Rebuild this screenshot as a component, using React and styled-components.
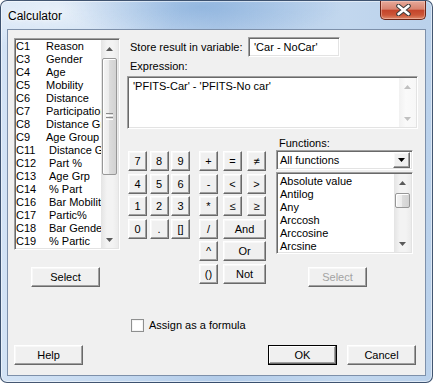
import React from 'react';
import styled, { createGlobalStyle, css } from 'styled-components';

const variables = [
    ['C1', 'Reason'], ['C3', 'Gender'], ['C4', 'Age'], ['C5', 'Mobility'],
    ['C6', 'Distance'], ['C7', 'Participation'], ['C8', 'Distance Group'],
    ['C9', 'Age Group'], ['C11', 'Distance Grp'], ['C12', 'Part %'],
    ['C13', 'Age Grp'], ['C14', '% Part'], ['C16', 'Bar Mobility'],
    ['C17', 'Partic%'], ['C18', 'Bar Gender'], ['C19', '% Partic'],
];

const functions = ['Absolute value', 'Antilog', 'Any', 'Arccosh', 'Arccosine', 'Arcsine'];

const digits = ['7', '8', '9', '4', '5', '6', '1', '2', '3', '0', '.', '[]'];

const operators = [
    ['+'], ['='], ['≠'],
    ['-'], ['<'], ['>'],
    ['*'], ['≤'], ['≥'],
    ['/'], ['And', 2],
    ['^'], ['Or', 2],
    ['()'], ['Not', 2],
];

const Arrow = ({ down, color = '#5a5a5a' }) => (
    <svg width="7" height="4" viewBox="0 0 7 4">
        <polygon points={down ? '0,0 7,0 3.5,4' : '0,4 7,4 3.5,0'} fill={color} />
    </svg>
);

const Grip = () => (
    <svg width="7" height="7" viewBox="0 0 7 7">
        {[0.5, 2.5, 4.5, 6.5].map((y) => (
            <line key={y} x1="0" x2="7" y1={y} y2={y} stroke={y % 4 < 1 ? '#8a8a8a' : '#fff'} strokeWidth="1" />
        ))}
    </svg>
);

const Scrollbar = ({ thumbTop, thumbHeight, disabled }) => (
    <ScrollTrack $disabled={disabled}>
        <ArrowBox><Arrow color={disabled ? '#c0c0c0' : '#5a5a5a'} /></ArrowBox>
        {thumbHeight ? (
            <Thumb $top={thumbTop} $h={thumbHeight}>
                {thumbHeight > 30 && <Grip />}
            </Thumb>
        ) : null}
        <ArrowBox $bottom><Arrow down color={disabled ? '#c0c0c0' : '#5a5a5a'} /></ArrowBox>
    </ScrollTrack>
);

const App = () => {
    return (
        <>
            <GlobalStyle />
            <Window>
                <TitleBar>
                    <Title>Calculator</Title>
                    <CloseButton>
                        <svg width="15" height="12" viewBox="0 0 15 12">
                            <path d="M2.5 2 L12.5 10 M12.5 2 L2.5 10" stroke="#3c3c3c" strokeWidth="4.6" strokeLinecap="round" />
                            <path d="M2.5 2 L12.5 10 M12.5 2 L2.5 10" stroke="#fff" strokeWidth="2.6" strokeLinecap="round" />
                        </svg>
                    </CloseButton>
                </TitleBar>
                <Client>
                    <TopSection>
                        <LeftCol>
                            <ListBox $h={212}>
                                <Items>
                                    {variables.map(([code, name]) => (
                                        <VarRow key={code}>
                                            <Code $w={code.length > 2 ? 33 : 30}>{code}</Code>
                                            <span>{name}</span>
                                        </VarRow>
                                    ))}
                                </Items>
                                <Scrollbar thumbTop={1} thumbHeight={117} />
                            </ListBox>
                            <Button $w={69} $ml={17} $mt={17}>Select</Button>
                        </LeftCol>
                        <RightCol>
                            <StoreRow>
                                <Label $w={121}>Store result in variable:</Label>
                                <TextInput>'Car - NoCar'</TextInput>
                            </StoreRow>
                            <Label $mt={3}>Expression:</Label>
                            <ExprBox>
                                <ExprText>'PFITS-Car' - 'PFITS-No car'</ExprText>
                                <Scrollbar disabled />
                            </ExprBox>
                            <Lower>
                                <Keypad>
                                    <DigitPad>
                                        {digits.map((d) => (
                                            <Key key={d}>{d}</Key>
                                        ))}
                                    </DigitPad>
                                    <OpPad>
                                        {operators.map(([op, span]) => (
                                            <Key key={op} $span={span}>{op}</Key>
                                        ))}
                                    </OpPad>
                                </Keypad>
                                <Functions>
                                    <Label>Functions:</Label>
                                    <Combo>
                                        <ComboText>All functions</ComboText>
                                        <ComboButton><Arrow down color="#000" /></ComboButton>
                                    </Combo>
                                    <ListBox $h={82} $mt={2}>
                                        <Items $pt={1}>
                                            {functions.map((f) => (
                                                <FuncRow key={f}>{f}</FuncRow>
                                            ))}
                                        </Items>
                                        <Scrollbar thumbTop={2} thumbHeight={15} />
                                    </ListBox>
                                    <Button $w={59} $ml={32} $mt={13} disabled>Select</Button>
                                </Functions>
                            </Lower>
                        </RightCol>
                    </TopSection>
                    <CheckRow>
                        <CheckBox />
                        <span>Assign as a formula</span>
                    </CheckRow>
                    <ButtonRow>
                        <Button $w={69}>Help</Button>
                        <ButtonGroup>
                            <Button $w={69} $default>OK</Button>
                            <Button $w={69}>Cancel</Button>
                        </ButtonGroup>
                    </ButtonRow>
                </Client>
            </Window>
        </>
    );
}

const GlobalStyle = createGlobalStyle`
    html, body {
        margin: 0;
        padding: 0;
        background: #ffffff;
    }
    body {
        font-family: "Liberation Sans", Arial, sans-serif;
        font-size: 11px;
        color: #000;
    }
    * {
        box-sizing: border-box;
    }
`

const raised = css`
    border: 1px solid;
    border-color: #ffffff #696969 #696969 #ffffff;
    box-shadow: inset -1px -1px #a0a0a0, inset 1px 1px #f8f8f8;
    background: #f0f0f0;
`

const sunken = css`
    border: 1px solid;
    border-color: #a0a0a0 #ffffff #ffffff #a0a0a0;
    box-shadow: inset 1px 1px #696969, inset -1px -1px #e3e3e3;
    background: #ffffff;
`

const Window = styled.div`
    width: 433px;
    height: 383px;
    border: 1px solid rgba(30, 50, 80, 0.8);
    border-radius: 7px;
    display: flex;
    flex-direction: column;
    overflow: hidden;
    background:
        radial-gradient(ellipse 140px 34px at 200px 6px, rgba(120, 165, 215, 0.55), transparent),
        radial-gradient(ellipse 120px 40px at 60px 10px, rgba(255, 255, 255, 0.55), transparent),
        linear-gradient(to right, #d3e3f5 0%, #c2d7ef 30%, #b3cce9 50%, #c2d7ee 80%, #bad1eb 100%);
    box-shadow: inset 0 0 0 1px rgba(255, 255, 255, 0.5);
`

const TitleBar = styled.div`
    height: 28px;
    display: flex;
    justify-content: space-between;
    align-items: flex-start;
`

const Title = styled.div`
    padding: 8px 0 0 7px;
    font-size: 12px;
    line-height: 14px;
    text-shadow: 0 0 6px rgba(255, 255, 255, 0.95), 0 0 3px rgba(255, 255, 255, 0.8);
`

const CloseButton = styled.div`
    width: 46px;
    height: 19px;
    margin-right: 6px;
    display: flex;
    align-items: center;
    justify-content: center;
    border: 1px solid #6a2416;
    border-top: none;
    border-radius: 0 0 5px 5px;
    background: linear-gradient(#e6a99a 0%, #d88470 45%, #c4452b 52%, #cc5638 78%, #de8a6c 100%);
    box-shadow: inset 0 0 0 1px rgba(255, 220, 210, 0.4);
`

const Client = styled.div`
    flex: 1;
    margin: 0 6px 6px 6px;
    padding: 8px 0 0 6px;
    display: flex;
    flex-direction: column;
    background: #f0f0f0;
    border: 1px solid #7d90aa;
`

const TopSection = styled.div`
    display: flex;
    align-items: flex-start;
`

const LeftCol = styled.div`
    width: 106px;
    display: flex;
    flex-direction: column;
`

const RightCol = styled.div`
    width: 291px;
    margin: -1px 0 0 7px;
    display: flex;
    flex-direction: column;
`

const ListBox = styled.div`
    ${sunken};
    height: ${(p) => p.$h}px;
    margin-top: ${(p) => p.$mt || 0}px;
    padding: 1px;
    display: flex;
    overflow: hidden;
`

const Items = styled.div`
    flex: 1;
    min-width: 0;
    padding-top: ${(p) => p.$pt || 0}px;
    overflow: hidden;
`

const VarRow = styled.div`
    height: 13px;
    line-height: 13px;
    display: flex;
    white-space: nowrap;
`

const Code = styled.span`
    flex: none;
    width: ${(p) => p.$w}px;
`

const FuncRow = styled.div`
    height: 13px;
    line-height: 13px;
    padding-left: 2px;
    white-space: nowrap;
`

const ScrollTrack = styled.div`
    width: 17px;
    flex: none;
    display: flex;
    flex-direction: column;
    background: ${(p) => p.$disabled
        ? 'linear-gradient(to right, #f1f1f1, #fafafa 40%, #f7f7f7)'
        : 'linear-gradient(to right, #e4e4e4, #f3f3f3 35%, #f3f3f3 70%, #ebebeb)'};
`

const ArrowBox = styled.div`
    height: 17px;
    flex: none;
    display: flex;
    align-items: center;
    justify-content: center;
    margin-top: ${(p) => (p.$bottom ? 'auto' : '0')};
`

const Thumb = styled.div`
    flex: none;
    height: ${(p) => p.$h}px;
    margin: ${(p) => p.$top}px 0 0 1px;
    width: 15px;
    border: 1px solid #979797;
    border-radius: 2px;
    display: flex;
    align-items: center;
    justify-content: center;
    background: linear-gradient(to right, #f5f5f5, #ececec 45%, #dcdcdc 50%, #d2d2d2);
    box-shadow: inset 1px 1px #ffffff;
`

const Button = styled.button`
    ${raised};
    width: ${(p) => p.$w}px;
    height: 20px;
    margin: ${(p) => p.$mt || 0}px 0 0 ${(p) => p.$ml || 0}px;
    padding: 0;
    font-family: inherit;
    font-size: 11px;
    color: #000;
    &:disabled {
        color: #a3a3a3;
    }
    ${(p) => p.$default && css`
        border-color: #000;
        box-shadow: inset -1px -1px #696969, inset 1px 1px #ffffff, inset -2px -2px #a0a0a0;
    `}
`

const Label = styled.div`
    line-height: 13px;
    padding-left: 3px;
    margin-top: ${(p) => p.$mt || 0}px;
    width: ${(p) => (p.$w ? `${p.$w}px` : 'auto')};
    flex: none;
    white-space: nowrap;
`

const StoreRow = styled.div`
    height: 20px;
    display: flex;
    align-items: center;
`

const TextInput = styled.div`
    ${sunken};
    width: 92px;
    height: 20px;
    padding: 0 0 0 5px;
    line-height: 18px;
    white-space: nowrap;
`

const ExprBox = styled.div`
    ${sunken};
    height: 53px;
    margin-top: 3px;
    padding: 1px;
    display: flex;
`

const ExprText = styled.div`
    flex: 1;
    padding: 2px 0 0 4px;
    line-height: 13px;
`

const Lower = styled.div`
    margin-top: 8px;
    display: flex;
    align-items: flex-start;
`

const Keypad = styled.div`
    margin: 14px 0 0 1px;
    display: flex;
    align-items: flex-start;
`

const DigitPad = styled.div`
    display: grid;
    grid-template-columns: repeat(3, 19px);
    grid-auto-rows: 20px;
    gap: 2.5px;
`

const OpPad = styled.div`
    margin-left: 9px;
    display: grid;
    grid-template-columns: repeat(3, 19px);
    grid-auto-rows: 20px;
    row-gap: 2.5px;
    column-gap: 5px;
`

const Key = styled.button`
    ${raised};
    grid-column: span ${(p) => p.$span || 1};
    padding: 0;
    font-family: inherit;
    font-size: 11px;
    color: #000;
`

const Functions = styled.div`
    width: 137px;
    margin-left: 10px;
    display: flex;
    flex-direction: column;
`

const Combo = styled.div`
    ${sunken};
    height: 20px;
    padding: 2px 2px 2px 0;
    display: flex;
    align-items: center;
`

const ComboText = styled.div`
    flex: 1;
    padding-left: 3px;
    white-space: nowrap;
`

const ComboButton = styled.div`
    ${raised};
    width: 17px;
    height: 16px;
    display: flex;
    align-items: center;
    justify-content: center;
`

const CheckRow = styled.div`
    margin: 32px 0 0 117px;
    height: 13px;
    line-height: 13px;
    display: flex;
    align-items: center;
    gap: 5px;
`

const CheckBox = styled.div`
    ${sunken};
    width: 13px;
    height: 13px;
    border-color: #8e8f8f;
    box-shadow: inset 1px 1px #f4f4f4, inset -1px -1px #f4f4f4;
`

const ButtonRow = styled.div`
    margin-top: 13px;
    padding-right: 9px;
    display: flex;
    justify-content: space-between;
`

const ButtonGroup = styled.div`
    display: flex;
    gap: 10px;
`

export default App;
